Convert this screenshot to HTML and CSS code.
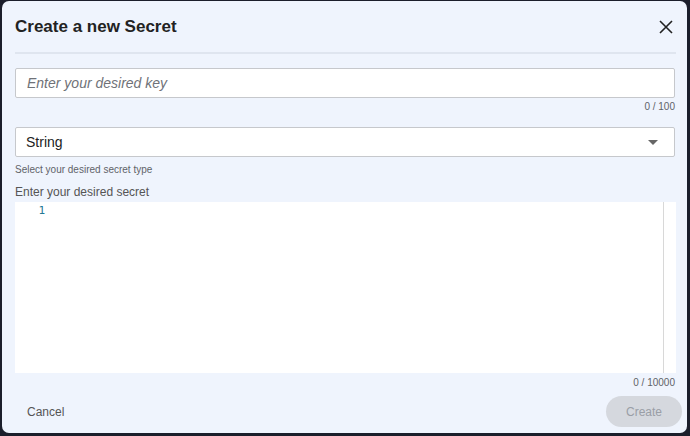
FILE: index.html
```html
<!DOCTYPE html>
<html>
<head>
<meta charset="utf-8">
<link rel="stylesheet" href="styles.css">
</head>
<body>
<div class="dialog">
  <div class="header">
    <h1 class="title">Create a new Secret</h1>
    <button class="close" aria-label="Close">
      <svg width="14" height="14" viewBox="0 0 14 14"><path d="M1 1L13 13M13 1L1 13" stroke="#222" stroke-width="1.6" fill="none"/></svg>
    </button>
  </div>
  <div class="divider"></div>
  <div class="content">
    <div class="field">
      <input class="text-input" type="text" placeholder="Enter your desired key">
      <div class="counter">0 / 100</div>
    </div>
    <div class="field select-field">
      <div class="select">
        <span>String</span>
        <svg class="caret" width="10" height="5" viewBox="0 0 10 5"><path d="M0 0H10L5 5Z" fill="#666"/></svg>
      </div>
      <div class="helper">Select your desired secret type</div>
    </div>
    <div class="label">Enter your desired secret</div>
    <div class="editor">
      <div class="gutter"><span class="lineno">1</span></div>
      <div class="code"></div>
      <div class="scroll"></div>
    </div>
    <div class="counter counter-editor">0 / 10000</div>
  </div>
  <div class="footer">
    <button class="btn-cancel">Cancel</button>
    <button class="btn-create" disabled>Create</button>
  </div>
</div>
</body>
</html>
```
FILE: styles.css
```css
* { box-sizing: border-box; }
html, body { margin: 0; padding: 0; }
body {
  background: #1b1e2b;
  width: 690px;
  height: 436px;
  font-family: "Liberation Sans", Arial, sans-serif;
  padding: 1px 3px 3px 2px;
}
.dialog {
  background: #eff4fd;
  border-radius: 7px;
  height: 432px;
  display: flex;
  flex-direction: column;
  padding: 0 12px 0 13px;
}
.header {
  display: flex;
  align-items: center;
  justify-content: space-between;
  height: 51px;
}
.title {
  margin: 0;
  font-size: 17px;
  font-weight: bold;
  color: #222;
}
.close {
  border: none;
  background: none;
  padding: 0;
  margin-right: 2px;
  width: 14px;
  height: 14px;
  display: flex;
}
.divider {
  height: 2px;
  background: #dfe5ef;
  margin-right: -1px;
}
.content {
  padding-top: 14px;
  display: flex;
  flex-direction: column;
}
.text-input {
  display: block;
  width: 100%;
  height: 30px;
  border: 1px solid #c6c8cc;
  border-radius: 2px;
  background: #fff;
  padding: 0 11px;
  font-family: "Liberation Sans", Arial, sans-serif;
  font-size: 14px;
  outline: none;
}
.text-input::placeholder {
  color: #6f7278;
  font-style: italic;
}
.counter {
  text-align: right;
  font-size: 10px;
  color: #5f6368;
  margin-top: 3px;
  height: 12px;
  line-height: 12px;
}
.select-field { margin-top: 14px; }
.select {
  height: 30px;
  border: 1px solid #c6c8cc;
  border-radius: 2px;
  background: #fff;
  display: flex;
  align-items: center;
  justify-content: space-between;
  padding: 0 16px 0 10px;
  font-size: 14px;
  color: #222;
}
.caret { display: block; }
.helper {
  font-size: 10px;
  color: #5f6368;
  margin-top: 7px;
  line-height: 12px;
}
.label {
  font-size: 12px;
  color: #555;
  margin-top: 9px;
  line-height: 14px;
}
.editor {
  height: 171px;
  background: #fff;
  display: flex;
  margin-top: 3px;
  margin-right: -1px;
}
.gutter {
  width: 30px;
  text-align: right;
  padding-top: 0;
  line-height: 14px;
}
.lineno {
  font-family: "DejaVu Sans Mono", monospace;
  font-size: 11px;
  color: #237893;
}
.code { flex: 1; }
.scroll {
  width: 13px;
  border-left: 1px solid #d8d8d8;
}
.counter-editor { margin-top: 4px; }
.footer {
  display: flex;
  justify-content: space-between;
  align-items: center;
  margin-top: 7px;
  margin-right: -7px;
}
.btn-cancel {
  border: none;
  background: none;
  font-family: "Liberation Sans", Arial, sans-serif;
  font-size: 12px;
  color: #555;
  padding: 0 12px;
  height: 30px;
}
.btn-create {
  border: none;
  background: #d5d8de;
  color: #9a9ea6;
  font-family: "Liberation Sans", Arial, sans-serif;
  font-size: 12px;
  border-radius: 16px;
  width: 76px;
  height: 31px;
}
```
